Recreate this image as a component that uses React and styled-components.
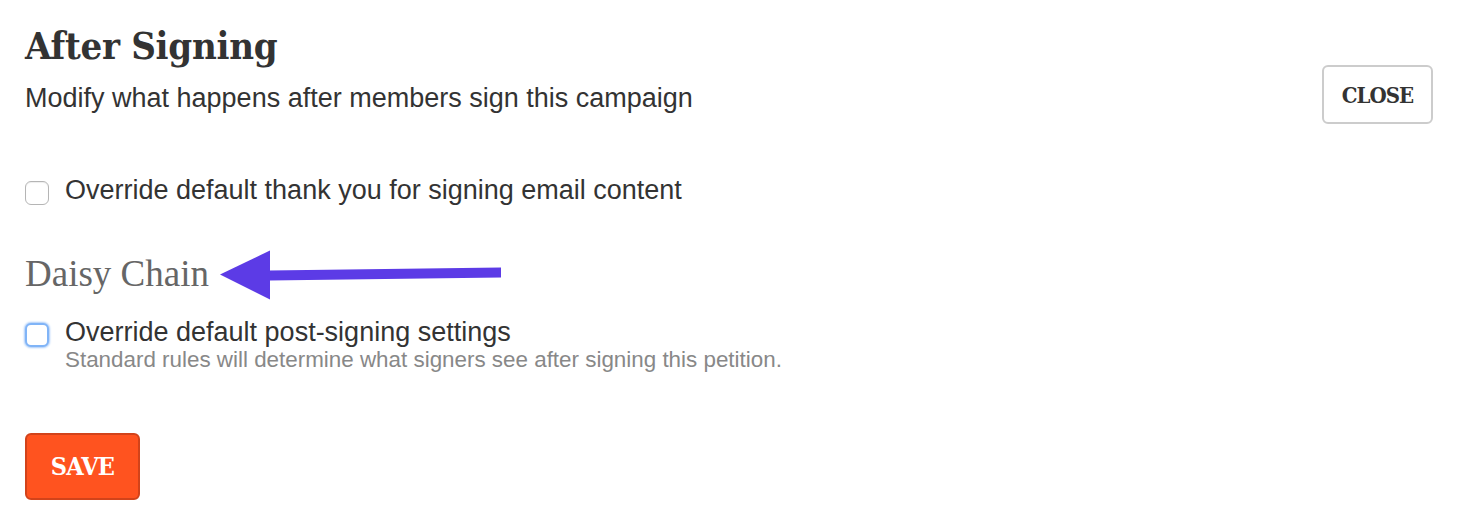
import React from "react";
import styled, { createGlobalStyle } from "styled-components";

const GlobalStyle = createGlobalStyle`
  body {
    margin: 0;
    background: #fff;
    font-family: "Liberation Sans", Arial, sans-serif;
    color: #333;
  }
`;

const Page = styled.div`
  padding: 22px 37px 0 25px;
`;

const Header = styled.div`
  display: flex;
  justify-content: space-between;
  align-items: flex-start;
`;

const Title = styled.h1`
  margin: 0;
  font-family: "DejaVu Serif", serif;
  font-stretch: condensed;
  font-weight: bold;
  font-size: 38px;
  line-height: 48px;
  color: #333;
  letter-spacing: -0.3px;
`;

const Subtitle = styled.p`
  margin: 12px 0 0;
  font-size: 27px;
  line-height: 32px;
  color: #333;
`;

const SlabButton = styled.button`
  font-family: "DejaVu Serif", serif;
  font-stretch: condensed;
  font-weight: bold;
  border-radius: 6px;
  cursor: pointer;
  padding: 0;
`;

const CloseButton = styled(SlabButton)`
  margin-top: 43px;
  width: 111px;
  height: 59px;
  background: #fff;
  color: #333;
  border: 2px solid #ccc;
  font-size: 22px;
  letter-spacing: -1px;
`;

const SaveButton = styled(SlabButton)`
  width: 115px;
  height: 67px;
  background: #ff531f;
  color: #fff;
  border: 2px solid #d2431a;
  font-size: 25px;
  letter-spacing: -0.8px;
`;

const CheckRow = styled.label`
  display: flex;
  align-items: flex-start;
  gap: 16px;
  margin-top: ${(p) => p.$top}px;
`;

const Box = styled.span`
  flex: none;
  box-sizing: border-box;
  width: 24px;
  height: 24px;
  margin-top: 7px;
  border-radius: 6px;
  background: #fff;
  border: ${(p) => (p.$focus ? "2px solid #80b4f7" : "1px solid #b5b5b5")};
  box-shadow: ${(p) => (p.$focus ? "0 0 2px 1px #a8cbf9" : "inset 0 1px 1px #eee")};
`;

const LabelText = styled.div`
  font-size: 27px;
  line-height: 32px;
  color: #333;
`;

const Help = styled.div`
  font-size: 22.4px;
  line-height: 24px;
  color: #888;
`;

const SectionWrap = styled.div`
  position: relative;
  margin-top: 46px;
`;

const SectionTitle = styled.h2`
  margin: 0;
  font-family: "Liberation Serif", "Times New Roman", serif;
  font-weight: normal;
  font-size: 37px;
  line-height: 44px;
  color: #666;
`;

const Arrow = styled.svg`
  position: absolute;
  left: 170px;
  top: -16px;
`;

const Footer = styled.div`
  margin-top: 61px;
`;

export default function App() {
  return (
    <Page>
      <GlobalStyle />
      <Header>
        <div>
          <Title>After Signing</Title>
          <Subtitle>Modify what happens after members sign this campaign</Subtitle>
        </div>
        <CloseButton>CLOSE</CloseButton>
      </Header>

      <CheckRow $top={50}>
        <Box />
        <LabelText>Override default thank you for signing email content</LabelText>
      </CheckRow>

      <SectionWrap>
        <SectionTitle>Daisy Chain</SectionTitle>
        <Arrow width="320" height="70" viewBox="0 0 320 70">
          <path d="M74 34.5 L306 31.5 L306 41.5 L74 44.5 Z" fill="#5c3be6" />
          <polygon points="25,38.5 75,14.5 75,63.5" fill="#5c3be6" />
        </Arrow>
      </SectionWrap>

      <CheckRow $top={20}>
        <Box $focus />
        <div>
          <LabelText>Override default post-signing settings</LabelText>
          <Help>Standard rules will determine what signers see after signing this petition.</Help>
        </div>
      </CheckRow>

      <Footer>
        <SaveButton>SAVE</SaveButton>
      </Footer>
    </Page>
  );
}
